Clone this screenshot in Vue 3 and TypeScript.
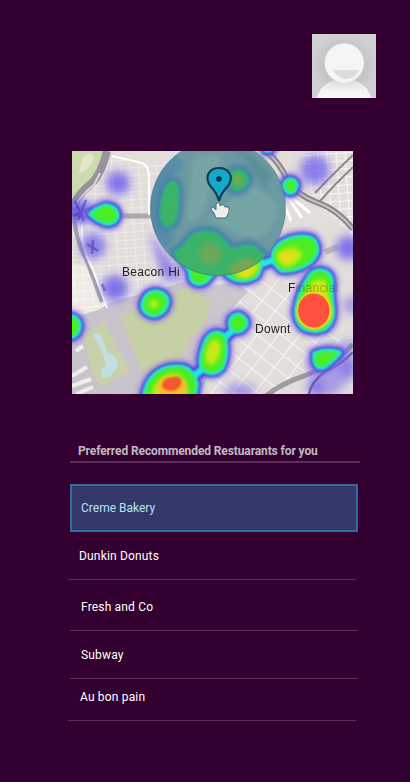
<script setup lang="ts">
interface Restaurant {
  name: string
  variant: string
}

interface HeatLayer {
  name: string
  filter: string
}

const restaurants: Restaurant[] = [
  { name: 'Creme Bakery', variant: 'selected' },
  { name: 'Dunkin Donuts', variant: 'outset' },
  { name: 'Fresh and Co', variant: 'tall' },
  { name: 'Subway', variant: 'regular' },
  { name: 'Au bon pain', variant: 'short' },
]

const layers: HeatLayer[] = [
  { name: 'halo', filter: 'url(#glow)' },
  { name: 'blue', filter: 'url(#melt)' },
  { name: 'cyan', filter: 'url(#blend)' },
  { name: 'green', filter: 'url(#melt)' },
]

const blobs: string[] = [
  'M91 214 Q98 208 106 206 Q116 207 117 215 Q116 223 107 223 Q98 221 91 214Z',
  'M290 180 Q296 181 296 186 Q294 193 289 192 Q284 189 285 184 Q286 181 290 180Z',
  'M266 147H270V150H266Z',
  'M180 254 Q187 248 192 239 Q208 231 220 243 Q230 253 244 249 Q256 248 260 259 Q261 269 256 276 Q246 282 236 279 Q228 277 224 269 Q215 268 210 276 Q205 284 197 283 Q190 281 191 272 Z',
  'M274 252 Q280 241 295 238 Q312 235 315 243 Q320 254 308 263 Q295 271 282 270 Q272 263 274 252Z',
  'M309 278 Q313 271 320 271 Q330 272 331 281 Q330 291 332 306 Q334 321 325 328 Q314 333 303 327 Q295 319 297 307 Q300 292 309 278Z',
  'M155 292 Q166 293 167 302 Q165 313 154 315 Q143 313 143 304 Q146 293 155 292Z',
  'M66 317 Q78 315 79 326 Q78 337 66 337Z',
  'M144 400 Q146 383 155 375 Q167 365 184 368 Q193 371 196 384 Q195 392 193 400Z',
  'M213 334 Q224 331 225 342 Q227 356 222 367 Q214 376 204 370 Q199 364 203 351 Q206 337 213 334Z',
  'M238 315 Q246 317 246 324 Q243 331 236 331 Q229 328 231 320 Q233 316 238 315Z',
  'M315 354 Q324 350 334 352 L339 353 Q333 360 323 367 Q314 368 315 354Z',
]

const bridges = 'M222 340L233 330M192 378L207 365M262 264L276 259'

const covered: string[] = [
  'M171 182 Q178 181 178 190 Q179 207 175 221 Q170 229 163 224 Q159 218 162 202 Q164 186 171 182Z',
  'M238 170 Q247 171 248 180 Q246 189 237 190 Q229 189 228 179 Q229 171 238 170Z',
  'M175 252 Q185 246 191 236 Q203 228 217 234 Q226 242 231 249 Q240 247 249 245 Q260 248 267 261 L263 282 H188Z',
]
</script>

<template>
  <main class="screen">
    <header class="top">
      <svg class="avatar" viewBox="0 0 64 64" role="img" aria-label="Profile">
        <defs>
          <radialGradient id="avatarBg">
            <stop offset="0.4" stop-color="#bdbdbd" />
            <stop offset="1" stop-color="#d0d0d0" />
          </radialGradient>
          <radialGradient id="bodyShade" cx=".5" cy="0" r=".7">
            <stop offset="0.3" stop-color="#dedede" />
            <stop offset="1" stop-color="#f6f6f6" />
          </radialGradient>
        </defs>
        <rect width="64" height="64" fill="url(#avatarBg)" />
        <path d="M4.500 64C9 51 18 45 32 45S55 51 59.500 64Z" fill="url(#bodyShade)" />
        <circle cx="32.300" cy="29" r="19.700" fill="#f5f5f5" />
        <path d="M21 36H47Q43 45 34 45Q25 44 21 36Z" fill="#dcdcdc" />
      </svg>
    </header>

    <svg class="map" viewBox="72 151 281 243" role="img" aria-label="Heat map">
      <defs>
        <filter id="soft" x="-10%" y="-10%" width="120%" height="120%"><feGaussianBlur stdDeviation="0.750" /></filter>
        <filter id="edge" x="-20%" y="-20%" width="140%" height="140%"><feGaussianBlur stdDeviation="0.450" /></filter>
        <filter id="blend" x="-10%" y="-10%" width="120%" height="120%"><feGaussianBlur stdDeviation="1.300" /></filter>
        <filter id="melt" x="-10%" y="-10%" width="120%" height="120%"><feGaussianBlur stdDeviation="1.800" /></filter>
        <filter id="glow" x="-20%" y="-20%" width="140%" height="140%"><feGaussianBlur stdDeviation="2.200" /></filter>
        <filter id="haze" x="-50%" y="-50%" width="200%" height="200%"><feGaussianBlur stdDeviation="5" /></filter>
        <clipPath id="radius"><circle cx="218" cy="208" r="67.500" /></clipPath>
        <pattern id="streets" width="9" height="8" patternUnits="userSpaceOnUse" patternTransform="rotate(-4)">
          <path d="M0 0H9M0 0V8" stroke="#fff" stroke-width="1.500" fill="none" />
        </pattern>
        <pattern id="diagonal" width="17" height="15" patternUnits="userSpaceOnUse" patternTransform="rotate(38)">
          <path d="M0 0H17M0 0V15" stroke="#fff" stroke-width="2" fill="none" />
        </pattern>
      </defs>
      <rect x="72" y="151" width="281" height="243" fill="#e3dedb" />

      <g filter="url(#soft)">
        <path d="M72 215L105 160H260V285L120 304L72 330Z" fill="url(#streets)" opacity=".5" />
        <path d="M235 285L300 270L350 350L275 394H210V345Z" fill="url(#diagonal)" opacity=".75" />
        <path d="M300 151H353V236L315 202Z" fill="url(#streets)" />
        <path d="M72 151H104L94 176L72 199Z" fill="#cbdcac" />
        <path d="M82 158Q91 149 94 158Q91 169 79 174Z" fill="#e5e6c9" />
        <path d="M72 318L112 302L184 282L207 287L236 285L228 320L201 394H72Z" fill="#c9c4cb" />
        <path d="M205 287L236 282L248 292L228 313L210 315Z" fill="#cbc7cc" />
        <path d="M72 318L98 310L107 305L90 266L72 264Z" fill="#efeae5" />
        <path d="M72 318L98 310L107 305L90 266L72 264Z" fill="url(#streets)" opacity=".6" />
        <path d="M120 316L135 310L188 286L210 301L205 322L190 338L178 364L144 375Z" fill="#c6d0a5" />
        <path d="M84 335L104 321L130 371L102 386L92 373Z" fill="#c8d1a9" />
        <path d="M93 334Q99 331 103 339L107 352Q118 355 118 366L110 377L102 378L101 371L106 365L103 354Z" fill="#c2dfe2" />
        <path d="M72 376L87 367M72 386L91 379M76 394L93 387M76 351L83 346" stroke="#f1eee9" stroke-width="4" />
        <path d="M72 213Q74 197 92 183Q101 174 107 151" stroke="#99949a" stroke-width="8" fill="none" />
        <path d="M74 207Q83 193 94 185L100 173M85 196L93 210" stroke="#ddd9dc" stroke-width="2" fill="none" />
        <path d="M72 214Q85 216 98 216L151 216" stroke="#aba7ab" stroke-width="5" fill="none" />
        <path d="M74 210Q74 238 87 261L102 302" stroke="#a6a1a8" stroke-width="4" fill="none" />
        <path d="M82 225Q80 245 93 270L107 308" stroke="#fff" stroke-width="2" fill="none" />
        <path d="M112 156L142 163Q149 166 149 176V215" stroke="#fff" stroke-width="2" fill="none" />
        <path d="M266 151Q281 164 287 180Q297 195 316 202Q337 209 353 229" stroke="#898588" stroke-width="6" fill="none" />
        <path d="M266 151Q281 164 287 180Q297 195 316 202Q337 209 353 229" stroke="#c8c3c5" stroke-width="2" fill="none" />
        <path d="M353 155Q331 176 315 193M353 167Q335 184 320 201" stroke="#8f8a8a" stroke-width="2" fill="none" />
        <path d="M287 196L302 218M283 202L291 221M291 197L310 213" stroke="#fff" stroke-width="3" />
        <path d="M266 396Q282 383 304 376Q337 363 353 344" stroke="#a09d9f" stroke-width="5" fill="none" />
      </g>

      <g filter="url(#haze)" fill="#6755ef">
        <circle cx="118" cy="183" r="12" opacity=".78" />
        <circle cx="93" cy="246" r="13" opacity=".7" />
        <circle cx="115" cy="288" r="13" opacity=".8" />
        <circle cx="315" cy="170" r="15" opacity=".72" />
        <circle cx="80" cy="212" r="12" opacity=".9" />
        <circle cx="348" cy="248" r="12" opacity=".8" />
        <circle cx="352" cy="305" r="9" opacity=".5" />
        <path d="M353 338L307 357L312 397H333L353 377Z" opacity=".48" />
        <circle cx="349" cy="368" r="9" opacity=".5" />
        <circle cx="315" cy="388" r="8" opacity=".6" />
        <ellipse cx="240" cy="391" rx="16" ry="7" opacity=".55" />
        <path d="M148 230L164 280L185 280Z" opacity=".7" />
      </g>

      <g filter="url(#soft)">
        <text class="place" x="122" y="276">Beacon Hi</text>
        <text class="place" x="255" y="333">Downt</text>
        <path d="M75 201L84 221M86 200L78 220M93 207L73 216M93 240L92 254M87 244L98 251M102 284L105 291" stroke="#3e3696" stroke-width="2.500" opacity=".5" />
        <path d="M309 394Q311 382 326 371Q342 364 353 352" stroke="#5553a9" stroke-width="2.500" fill="none" opacity=".8" />
        <path d="M325 252L338 247" stroke="#85818a" stroke-width="6" opacity=".4" />
      </g>

      <g v-for="layer in layers" :key="layer.name" :class="['heat', layer.name]" :filter="layer.filter">
        <path v-for="blob in blobs" :key="blob" :d="blob" />
        <path :d="bridges" class="bridge" />
      </g>

      <g filter="url(#glow)" fill="#cbe918">
        <path d="M277 253Q287 246 297 248L303 254Q297 266 285 267Q276 263 277 253Z" />
        <path d="M232 270Q248 263 259 264Q258 279 239 278Z" />
        <path d="M151 400Q153 376 174 373Q190 376 187 400Z" />
        <ellipse cx="213" cy="352" rx="7" ry="13" transform="rotate(15 213 352)" />
        <circle cx="154" cy="304" r="4" />
        <path d="M314 280L326 280L330 303L331 318L316 330L300 321L300 302Z" />
      </g>
      <g filter="url(#blend)">
        <ellipse cx="314" cy="311" rx="17.500" ry="18.500" fill="#ffd51c" />
        <ellipse cx="172" cy="387" rx="15" ry="11" fill="#ffb92b" opacity=".85" />
        <path d="M162 384Q164 377 172 377Q181 375 182 382Q181 387 176 390Q169 393 164 389Q161 387 162 384Z" fill="#f2582b" />
        <circle cx="287" cy="257" r="5" fill="#ffd21d" opacity=".6" />
        <circle cx="246" cy="273" r="4" fill="#ffd21d" opacity=".7" />
      </g>
      <ellipse cx="313.800" cy="310.500" rx="15.700" ry="17" fill="#ff513c" filter="url(#edge)" />
      <text class="place" x="288" y="292" filter="url(#soft)">F<tspan class="hidden-part">inancial</tspan></text>

      <g clip-path="url(#radius)">
        <circle cx="218" cy="208" r="68" fill="#67979f" fill-opacity=".96" />
        <g filter="url(#glow)">
          <path d="M192 162Q203 150 222 157L211 188Q198 231 187 218ZM209 219L250 183L277 204Q275 239 249 238Z" fill="#79aaa6" opacity=".65" />
          <path d="M218 143Q249 144 272 176L265 190L243 157Z" fill="#568b95" opacity=".7" />
          <path d="M180 160Q151 181 151 215Q157 235 172 242" stroke="#4d84ac" stroke-width="15" fill="none" opacity=".65" />
        </g>
        <g class="covered-halo" filter="url(#glow)"><path v-for="shape in covered" :key="shape" :d="shape" /></g>
        <g class="covered-rim" filter="url(#blend)"><path v-for="shape in covered" :key="shape" :d="shape" /></g>
        <g class="covered-core" filter="url(#blend)"><path v-for="shape in covered" :key="shape" :d="shape" /></g>
        <g filter="url(#glow)" fill="#79a653">
          <circle cx="238" cy="180" r="5" />
          <ellipse cx="210" cy="254" rx="11" ry="11" opacity=".75" />
          <path d="M229 267Q243 255 258 261L252 275H232Z" />
        </g>
      </g>
      <circle cx="218" cy="208" r="67.500" fill="none" stroke="#396f84" stroke-opacity=".5" filter="url(#edge)" />

      <g filter="url(#edge)">
        <path d="M219 201Q217 193 211 187C203 176 210 168 219 168S235 176 228 186Q221 193 219 201Z" fill="#16a7cc" stroke="#0e3d50" stroke-width="2.200" />
        <circle cx="219" cy="179" r="2.800" fill="#102f45" />
        <path d="M216 218L214 213L211 209Q211 206 214 208L216 210V204Q218 201 220 204V206L223 204L225 207L229 207V212L226 218Z" fill="#f3eeee" stroke="#496a72" stroke-width="1" />
      </g>
    </svg>

    <section class="recommendations">
      <h1 class="heading"><span>Preferred Recommended Restuarants for you</span></h1>
      <ul class="list">
        <li v-for="item in restaurants" :key="item.name" class="row" :class="item.variant">
          <span>{{ item.name }}</span>
        </li>
      </ul>
    </section>
  </main>
</template>

<style>
body {
  background: #330031;
}
</style>

<style scoped>
.screen {
  box-sizing: border-box;
  width: 410px;
  height: 782px;
  padding-top: 34px;
  overflow: hidden;
  background: #330031;
  font-family: Roboto, "Liberation Sans", sans-serif;
  font-size: 12px;
}
.top {
  display: flex;
  justify-content: flex-end;
  padding-right: 34px;
}
.avatar {
  display: block;
  width: 64px;
  height: 64px;
}
.map {
  display: block;
  width: 281px;
  height: 243px;
  margin: 53px 0 0 72px;
}
.place {
  font: 12px "Liberation Sans", sans-serif;
  letter-spacing: 0.3px;
  fill: #222;
}
.hidden-part {
  fill-opacity: 0.3;
}
.heat {
  stroke-linejoin: round;
  stroke-linecap: round;
}
.halo {
  fill: #8c7aea;
  stroke: #8c7aea;
  stroke-width: 17px;
  opacity: 0.6;
}
.blue {
  fill: #4a3ad8;
  stroke: #4a3ad8;
  stroke-width: 10px;
}
.cyan {
  fill: #20e7df;
  stroke: #20e7df;
  stroke-width: 6px;
}
.green {
  fill: #49ed21;
  stroke: #49ed21;
  stroke-width: 0.5px;
}
.blue .bridge {
  stroke-width: 13px;
}
.cyan .bridge {
  stroke-width: 7px;
}
.green .bridge {
  stroke-width: 0;
}
.covered-halo {
  fill: #457daa;
  stroke: #457daa;
  stroke-width: 11px;
  opacity: 0.8;
}
.covered-rim {
  fill: #2fa79f;
  stroke: #2fa79f;
  stroke-width: 3px;
}
.covered-core {
  fill: #3bb367;
}
.recommendations {
  margin: 48px 50px 0 70px;
}
.heading {
  box-sizing: border-box;
  height: 21px;
  margin: 0;
  padding: 0 8px;
  border-bottom: 2px solid #5b315c;
  color: #c1bac1;
  font-size: 12px;
  font-weight: 700;
  letter-spacing: -0.11px;
  line-height: 18px;
  white-space: nowrap;
}
.list {
  width: 288px;
  margin: 21px 0 0;
  padding: 0;
  list-style: none;
}
.row {
  box-sizing: border-box;
  display: flex;
  align-items: center;
  height: 48px;
  padding-left: 11px;
  border-bottom: 1px solid #5b315c;
  color: #fff;
  letter-spacing: 0.17px;
  line-height: 16px;
}
.selected {
  padding-left: 9px;
  border: 2px solid #326d9b;
  background: #333769;
  color: #b7e5ec;
  letter-spacing: 0;
}
.outset {
  margin-left: -2px;
  margin-right: 2px;
}
.tall {
  height: 51px;
  padding-top: 3px;
}
.short {
  height: 42px;
  margin-left: -2px;
  margin-right: 2px;
  padding: 0 0 6px 12px;
}
</style>
